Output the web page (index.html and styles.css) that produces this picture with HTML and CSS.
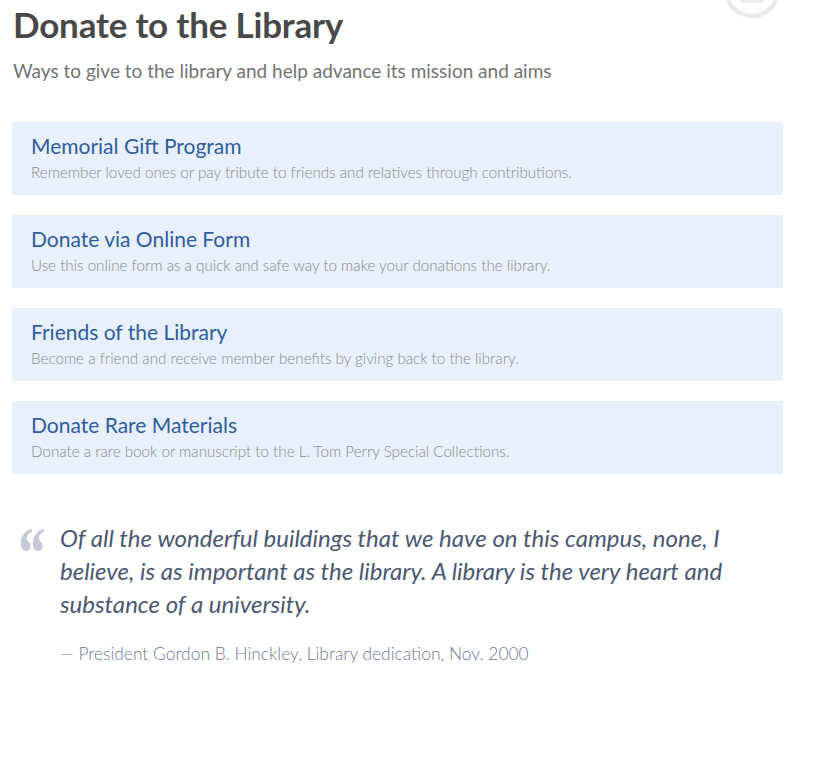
FILE: index.html
```html
<!DOCTYPE html>
<html lang="en">
<head>
<meta charset="utf-8">
<title>Donate to the Library</title>
<link rel="stylesheet" href="styles.css">
</head>
<body>
<div class="page">
  <svg class="corner-icon" width="70" height="50" viewBox="0 0 70 50" aria-hidden="true">
    <circle cx="36" cy="-10" r="26" fill="none" stroke="#e7eaf0" stroke-width="4.5"/>
    <line x1="26" y1="1" x2="46" y2="1" stroke="#e7eaf0" stroke-width="3" stroke-linecap="round"/>
  </svg>
  <header class="intro">
    <h1 class="title">Donate to the Library</h1>
    <p class="subtitle">Ways to give to the library and help advance its mission and aims</p>
  </header>
  <ul class="options">
    <li class="option">
      <a class="option-title" href="#">Memorial Gift Program</a>
      <p class="option-desc">Remember loved ones or pay tribute to friends and relatives through contributions.</p>
    </li>
    <li class="option">
      <a class="option-title" href="#">Donate via Online Form</a>
      <p class="option-desc">Use this online form as a quick and safe way to make your donations the library.</p>
    </li>
    <li class="option">
      <a class="option-title" href="#">Friends of the Library</a>
      <p class="option-desc">Become a friend and receive member benefits by giving back to the library.</p>
    </li>
    <li class="option">
      <a class="option-title" href="#">Donate Rare Materials</a>
      <p class="option-desc">Donate a rare book or manuscript to the L. Tom Perry Special Collections.</p>
    </li>
  </ul>
  <blockquote class="quote">
    <div class="quote-mark-col"><span class="quote-mark">&ldquo;</span></div>
    <div class="quote-body">
      <p class="quote-text">Of all the wonderful buildings that we have on this campus, none, I believe, is as important as the library. A library is the very heart and substance of a university.</p>
      <p class="quote-cite">&mdash; President Gordon B. Hinckley, Library dedication, Nov. 2000</p>
    </div>
  </blockquote>
</div>
</body>
</html>
```

FILE: styles.css
```css
* { box-sizing: border-box; }
html, body { margin: 0; padding: 0; background: #fff; }
body {
  font-family: Lato, "Open Sans", sans-serif;
  color: #4a4a4a;
}
.page {
  position: relative;
  width: 830px;
  min-height: 760px;
  padding: 2px 47px 0 12px;
}
.corner-icon {
  position: absolute;
  top: 0;
  left: 716px;
}
.intro { padding-left: 1px; }
.title {
  margin: 0;
  font-size: 35px;
  line-height: 44px;
  font-weight: 700;
  color: #484848;
  letter-spacing: -0.2px;
}
.subtitle {
  margin: 13px 0 0;
  font-size: 19px;
  line-height: 24px;
  font-weight: 400;
  color: #737373;
}
.options {
  list-style: none;
  margin: 39px 0 0;
  padding: 0;
  display: flex;
  flex-direction: column;
  gap: 20px;
}
.option {
  background: #e8f0fb;
  border-radius: 2px;
  height: 73px;
  padding: 11px 19px 0;
}
.option-title {
  display: block;
  font-size: 21px;
  line-height: 26px;
  color: #2f5d9c;
  text-decoration: none;
}
.option-desc {
  margin: 4px 0 0;
  font-size: 15.2px;
  line-height: 18px;
  font-weight: 300;
  color: #8c8c8c;
}
.quote {
  margin: 47px 0 0;
  padding: 0;
  display: flex;
}
.quote-mark-col {
  width: 48px;
  flex: none;
  padding-left: 3px;
  height: 40px;
  overflow: visible;
}
.quote-mark {
  display: inline-block;
  margin-top: -5px;
  transform: scaleX(0.8);
  transform-origin: left top;
  font-family: "Liberation Serif", serif;
  font-style: italic;
  font-weight: 700;
  font-size: 74px;
  line-height: 74px;
  color: #c6ccd7;
}
.quote-body { width: 705px; flex: none; }
.quote-text {
  margin: 0;
  font-size: 24px;
  line-height: 33px;
  font-style: italic;
  color: #4b5872;
}
.quote-cite {
  margin: 23px 0 0;
  font-size: 17.4px;
  line-height: 22px;
  font-weight: 300;
  color: #6c7a92;
}
```
